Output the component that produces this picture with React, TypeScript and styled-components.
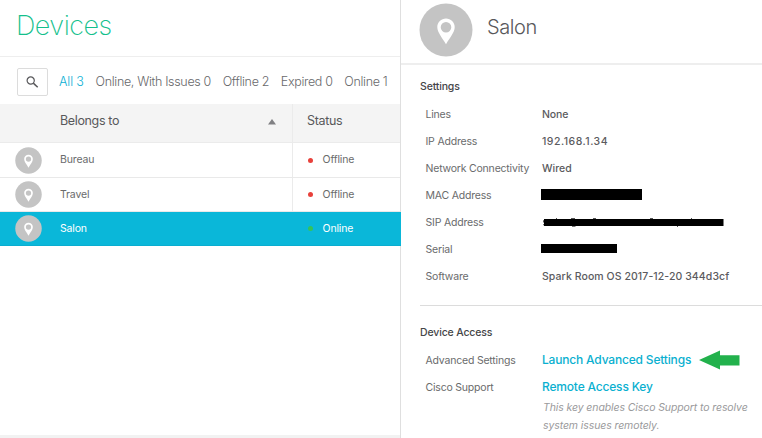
import React from "react";
import styled, { createGlobalStyle } from "styled-components";

const Global = createGlobalStyle`
  * { box-sizing: border-box; }
  html, body { margin: 0; padding: 0; background: #fff; overflow: hidden; }
  body { font-family: Inter, "Liberation Sans", sans-serif; color: #58585b; }
`;

const Page = styled.div`
  display: flex;
  width: 762px;
  height: 438px;
  overflow: hidden;
  background: #fff;
  white-space: nowrap;
`;

const ListPanel = styled.section`
  display: flex;
  flex-direction: column;
  flex: 0 0 401px;
  width: 401px;
  min-width: 0;
  border-right: 1px solid #dfdfdf;
`;

const TitleBar = styled.header`
  height: 57px;
  padding: 8px 0 0 16px;
  border-bottom: 1px solid #eeeeee;
`;

const Title = styled.h1`
  margin: 0;
  font-size: 27px;
  line-height: 35px;
  font-weight: 250;
  letter-spacing: -0.5px;
  color: #14bf8c;
`;

const FilterBar = styled.div`
  display: flex;
  height: 47px;
  padding: 11px 0 0 17px;
`;

const SearchButton = styled.button`
  display: flex;
  align-items: center;
  justify-content: center;
  flex: none;
  width: 31px;
  height: 28px;
  padding: 0;
  border: 1px solid #dcdcdc;
  border-radius: 2px;
  background: #fff;
`;

const Filters = styled.nav`
  display: flex;
  gap: 11.7px;
  margin-left: 11px;
  line-height: 28px;
`;

const Filter = styled.span<{ $active?: boolean }>`
  font-size: 12.5px;
  font-weight: 300;
  letter-spacing: ${(p) => (p.$active ? -0.1 : -0.33)}px;
  color: ${(p) => (p.$active ? "#0ab0d4" : "#68686b")};
`;

const TableHead = styled.div`
  display: grid;
  grid-template-columns: 292px 1fr;
  height: 39px;
  background: #f4f4f4;
  border-bottom: 1px solid #ebebeb;
  font-size: 12.5px;
  line-height: 34px;
  letter-spacing: -0.35px;
  color: #58585b;
`;

const HeadName = styled.div`
  display: flex;
  justify-content: space-between;
  align-items: flex-start;
  padding: 0 16px 0 60px;
  svg { margin-top: 15px; }
`;

const HeadStatus = styled.div`
  padding-left: 14px;
  border-left: 1px solid #ebebeb;
`;

const Row = styled.div<{ $selected?: boolean; $height: number }>`
  display: grid;
  grid-template-columns: 292px 1fr;
  height: ${(p) => p.$height}px;
  margin-right: ${(p) => (p.$selected ? -1 : 0)}px;
  border-bottom: 1px solid ${(p) => (p.$selected ? "#0aadd0" : "#e9e9e9")};
  background: ${(p) => (p.$selected ? "#0ab7d9" : "#fff")};
  color: ${(p) => (p.$selected ? "#fff" : "#6a6b6c")};
  font-size: 10.5px;
  letter-spacing: -0.15px;
`;

const NameCell = styled.div`
  display: flex;
  align-items: center;
  padding-left: 15px;
  gap: 18px;
`;

const CellText = styled.span`
  padding-bottom: 1px;
`;

const StatusCell = styled.div<{ $selected?: boolean }>`
  display: flex;
  align-items: center;
  gap: 9.5px;
  padding-left: 15px;
  border-left: 1px solid ${(p) => (p.$selected ? "transparent" : "#ebebeb")};
`;

const Dot = styled.i<{ $color: string }>`
  width: 5px;
  height: 5px;
  border-radius: 50%;
  background: ${(p) => p.$color};
`;

const ListFooter = styled.footer`
  height: 3px;
  margin-top: auto;
  background: #f2f2f2;
`;

const DetailPanel = styled.aside`
  flex: 1;
  min-width: 0;
`;

const DetailHeader = styled.header`
  display: flex;
  height: 65px;
  padding: 3px 0 0 18px;
  border-bottom: 2px solid #eeeeee;
`;

const DeviceName = styled.h2`
  margin: 8px 0 0 14px;
  font-size: 20px;
  line-height: 32px;
  font-weight: 300;
  letter-spacing: -0.4px;
  color: #58585b;
`;

const Section = styled.section<{ $divided?: boolean }>`
  margin-left: 19px;
  padding-top: ${(p) => (p.$divided ? 13 : 8)}px;
  height: ${(p) => (p.$divided ? "auto" : "240px")};
  border-top: ${(p) => (p.$divided ? "1px solid #dcdcdc" : "none")};
`;

const SectionTitle = styled.h3`
  margin: 0;
  height: 27px;
  line-height: 28px;
  font-size: 10.5px;
  font-weight: 500;
  letter-spacing: -0.15px;
  color: #454548;
`;

const Field = styled.div`
  display: grid;
  grid-template-columns: 116.5px 1fr;
  align-items: center;
  height: 27px;
  padding-left: 5.5px;
`;

const Label = styled.span`
  padding-top: 1px;
  font-size: 10.5px;
  font-weight: 400;
  letter-spacing: -0.2px;
  color: #6a6b6c;
`;

const Value = styled.span<{ $tracking?: number }>`
  padding-top: 1px;
  font-size: 10.5px;
  font-weight: 500;
  letter-spacing: ${(p) => p.$tracking ?? 0}px;
  color: #5b5b5e;
`;

const Link = styled.a`
  font-size: 12px;
  font-weight: 500;
  letter-spacing: -0.18px;
  color: #0ab0d0;
`;

const LinkLine = styled.div`
  display: flex;
  align-items: center;
  gap: 8px;
`;

const Redaction = styled.div<{ $width: number; $height: number }>`
  width: ${(p) => p.$width}px;
  height: ${(p) => p.$height}px;
  margin-left: -1px;
  background: #000;
`;

const Hint = styled.p`
  margin: -1px 0 0 123px;
  font-size: 10.5px;
  line-height: 18px;
  font-style: italic;
  letter-spacing: -0.1px;
  color: #9a9a9c;
`;

const Pin = ({ size }: { size: number }) => (
  <svg width={size} height={size} viewBox="0 0 54 54">
    <circle cx="27" cy="27" r="26.5" fill="#c4c4c4" />
    <path
      fillRule="evenodd"
      fill="#fff"
      d="M27 15.5c-4.8 0-8.7 3.8-8.7 8.6 0 5.4 4.3 9.8 8.7 17.2 4.4-7.4 8.7-11.8 8.7-17.2 0-4.8-3.9-8.6-8.7-8.6zm0 3.4a5.3 5.3 0 1 1 0 10.6 5.3 5.3 0 0 1 0-10.6z"
    />
  </svg>
);

const SearchIcon = () => (
  <svg width="13" height="13" viewBox="0 0 13 13" fill="none" stroke="#58585b">
    <circle cx="4.7" cy="4.5" r="3.6" strokeWidth="1.2" />
    <path d="M7.3 7.1l4.4 4.2" strokeWidth="1.5" />
  </svg>
);

const StruckAddress = () => (
  <svg width="184" height="13" viewBox="0 0 184 13">
    <path
      d="M3.5 5.5H1.5v1.7l2 .7v1.8H1M14.5 3v2M29 3.5h4M30 11.3h3.5M51 3.5h3M108 3.5h3M135.5 10v2M149.5 3v2"
      fill="none"
      stroke="#555"
    />
    <path d="M2 4h179.5v7H2z" />
  </svg>
);

const devices = [
  { name: "Bureau", status: "Offline", color: "#e8413b", height: 35 },
  { name: "Travel", status: "Offline", color: "#e8413b", height: 34 },
  { name: "Salon", status: "Online", color: "#34c35a", height: 34, selected: true },
];

export default function App() {
  return (
    <>
      <Global />
      <Page>
        <ListPanel>
          <TitleBar>
            <Title>Devices</Title>
          </TitleBar>
          <FilterBar>
            <SearchButton aria-label="Search">
              <SearchIcon />
            </SearchButton>
            <Filters>
              <Filter $active>All 3</Filter>
              <Filter>Online, With Issues 0</Filter>
              <Filter>Offline 2</Filter>
              <Filter>Expired 0</Filter>
              <Filter>Online 1</Filter>
            </Filters>
          </FilterBar>
          <TableHead>
            <HeadName>
              Belongs to
              <svg width="8" height="6" viewBox="0 0 8 6">
                <path d="M0 5.5L4 0l4 5.5z" fill="#808083" />
              </svg>
            </HeadName>
            <HeadStatus>Status</HeadStatus>
          </TableHead>
          {devices.map((d) => (
            <Row key={d.name} $selected={d.selected} $height={d.height}>
              <NameCell>
                <Pin size={27} />
                <CellText>{d.name}</CellText>
              </NameCell>
              <StatusCell $selected={d.selected}>
                <Dot $color={d.color} />
                <CellText>{d.status}</CellText>
              </StatusCell>
            </Row>
          ))}
          <ListFooter />
        </ListPanel>
        <DetailPanel>
          <DetailHeader>
            <Pin size={54} />
            <DeviceName>Salon</DeviceName>
          </DetailHeader>
          <Section>
            <SectionTitle>Settings</SectionTitle>
            <Field>
              <Label>Lines</Label>
              <Value $tracking={-0.15}>None</Value>
            </Field>
            <Field>
              <Label>IP Address</Label>
              <Value $tracking={0.5}>192.168.1.34</Value>
            </Field>
            <Field>
              <Label>Network Connectivity</Label>
              <Value>Wired</Value>
            </Field>
            <Field>
              <Label>MAC Address</Label>
              <Redaction $width={101} $height={11} />
            </Field>
            <Field>
              <Label>SIP Address</Label>
              <StruckAddress />
            </Field>
            <Field>
              <Label>Serial</Label>
              <Redaction $width={76} $height={9} />
            </Field>
            <Field>
              <Label>Software</Label>
              <Value $tracking={0.08}>Spark Room OS 2017-12-20 344d3cf</Value>
            </Field>
          </Section>
          <Section $divided>
            <SectionTitle>Device Access</SectionTitle>
            <Field>
              <Label>Advanced Settings</Label>
              <LinkLine>
                <Link>Launch Advanced Settings</Link>
                <svg width="41" height="20" viewBox="0 0 41 20">
                  <path d="M0 10L21 .5v4.7h19.5v10.3H21v4z" fill="#22b14c" />
                </svg>
              </LinkLine>
            </Field>
            <Field>
              <Label>Cisco Support</Label>
              <Link>Remote Access Key</Link>
            </Field>
            <Hint>
              This key enables Cisco Support to resolve
              <br />
              system issues remotely.
            </Hint>
          </Section>
        </DetailPanel>
      </Page>
    </>
  );
}
